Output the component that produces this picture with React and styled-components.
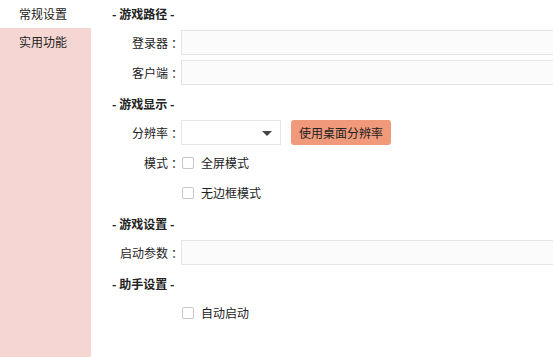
import React, { useState } from 'react';
import styled, { createGlobalStyle } from 'styled-components';

const GlobalStyle = createGlobalStyle`
  html, body {
    margin: 0;
    padding: 0;
    background: #ffffff;
  }
  body {
    font-family: "Microsoft YaHei", "Noto Sans CJK SC", "Noto Sans", sans-serif;
    font-size: 12px;
    color: #222;
  }
`;

const App = () => {
  const [active, setActive] = useState(0);
  const [checks, setChecks] = useState({ full: false, borderless: false, auto: false });
  const toggle = (key) => setChecks((c) => ({ ...c, [key]: !c[key] }));

  return (
    <>
      <GlobalStyle />
      <Page>
        <Sidebar>
          {['常规设置', '实用功能'].map((label, i) => (
            <NavItem key={label} $active={active === i} onClick={() => setActive(i)}>
              {label}
            </NavItem>
          ))}
        </Sidebar>

        <Main>
          {/* 游戏路径 */}
          <Section>
            <Title>- 游戏路径 -</Title>
            <Row>
              <Label>登录器<Colon>：</Colon></Label>
              <TextInput />
            </Row>
            <Row>
              <Label>客户端<Colon>：</Colon></Label>
              <TextInput />
            </Row>
          </Section>

          {/* 游戏显示 */}
          <Section>
            <Title>- 游戏显示 -</Title>
            <Row>
              <Label>分辨率<Colon>：</Colon></Label>
              <Select>
                <Arrow />
              </Select>
              <Button>使用桌面分辨率</Button>
            </Row>
            <Row>
              <Label>模式<Colon>：</Colon></Label>
              <Check onClick={() => toggle('full')}>
                <Box $on={checks.full} />
                全屏模式
              </Check>
            </Row>
            <Row>
              <Label />
              <Check onClick={() => toggle('borderless')}>
                <Box $on={checks.borderless} />
                无边框模式
              </Check>
            </Row>
          </Section>

          {/* 游戏设置 */}
          <Section>
            <Title>- 游戏设置 -</Title>
            <Row>
              <Label>启动参数<Colon>：</Colon></Label>
              <TextInput />
            </Row>
          </Section>

          {/* 助手设置 */}
          <Section>
            <Title>- 助手设置 -</Title>
            <Row>
              <Label />
              <Check onClick={() => toggle('auto')}>
                <Box $on={checks.auto} />
                自动启动
              </Check>
            </Row>
          </Section>
        </Main>
      </Page>
    </>
  );
};

const Page = styled.div`
  display: flex;
  width: 553px;
  height: 357px;
  overflow: hidden;
`;

const Sidebar = styled.nav`
  width: 91px;
  flex-shrink: 0;
  background: #f5d6d2;
`;

const NavItem = styled.div`
  height: 28px;
  line-height: 28px;
  padding-left: 19px;
  background: ${(p) => (p.$active ? '#ffffff' : 'transparent')};
  cursor: pointer;
`;

const Main = styled.main`
  flex: 1;
  min-width: 0;
  padding-left: 21px;
  display: flex;
  flex-direction: column;
  gap: 5px;
`;

const Section = styled.section`
  display: flex;
  flex-direction: column;
  gap: 5px;
`;

const Title = styled.div`
  height: 28px;
  line-height: 28px;
  font-weight: bold;
  margin-bottom: -3px;
`;

const Row = styled.div`
  display: flex;
  align-items: center;
  height: 25px;
`;

const Label = styled.div`
  display: flex;
  justify-content: flex-end;
  width: 68px;
  flex-shrink: 0;
  white-space: nowrap;
`;

const Colon = styled.span`
  display: inline-block;
  width: 12px;
  text-align: center;
  text-indent: 3px;
`;

const TextInput = styled.input`
  flex: 1;
  min-width: 0;
  height: 25px;
  box-sizing: border-box;
  border: 1px solid #e5e5e5;
  border-right: none;
  background: #fbfbfb;
  outline: none;
  margin-left: 1px;
  margin-right: -4px;
`;

const Select = styled.div`
  position: relative;
  margin-left: 1px;
  width: 100px;
  height: 25px;
  box-sizing: border-box;
  border: 1px solid #e5e5e5;
  background: #ffffff;
`;

const Arrow = styled.span`
  position: absolute;
  right: 8px;
  top: 10px;
  width: 0;
  height: 0;
  border-left: 5px solid transparent;
  border-right: 5px solid transparent;
  border-top: 5px solid #444;
`;

const Button = styled.button`
  margin-left: 10px;
  width: 100px;
  height: 25px;
  border: none;
  border-radius: 3px;
  background: #f0997b;
  color: #222;
  font: inherit;
  padding: 0;
  cursor: pointer;
`;

const Check = styled.label`
  display: flex;
  align-items: center;
  gap: 7px;
  margin-left: 2px;
  cursor: pointer;
`;

const Box = styled.span`
  width: 12px;
  height: 12px;
  box-sizing: border-box;
  border: 1px solid #c8c8c8;
  border-radius: 2px;
  background: ${(p) => (p.$on ? '#f0997b' : '#ffffff')};
`;

export default App;
